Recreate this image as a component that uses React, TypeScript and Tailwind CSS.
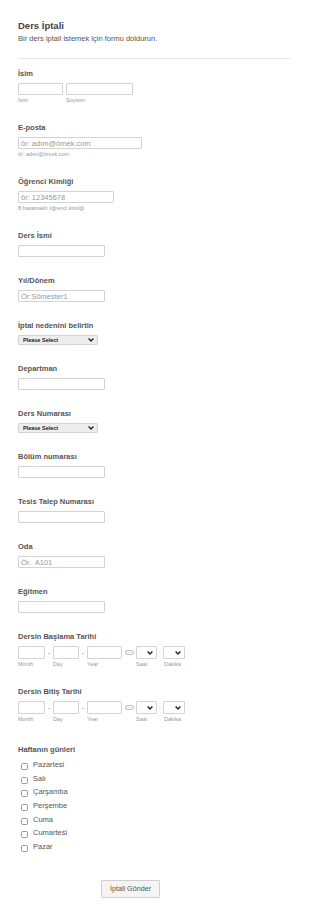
import React from 'react';

const font = { fontFamily: '"Liberation Sans", Arial, sans-serif' };

function Label({ children }: { children: React.ReactNode }) {
    return <div className="text-[7.5px] font-bold leading-[10px] text-[#555]">{children}</div>;
}

function Sub({ children, className = '' }: { children: React.ReactNode; className?: string }) {
    return <div className={`mt-[2px] text-[5.5px] leading-[7px] text-[#999] ${className}`}>{children}</div>;
}

function TextBox({ w, placeholder }: { w: string; placeholder?: string }) {
    return (
        <input
            type="text"
            placeholder={placeholder}
            className={`block ${w} h-[12px] px-[2px] border border-[#d3d3d3] rounded-[1px] bg-white text-[7.5px] leading-[10px] text-[#555] placeholder:text-[#999] outline-none`}
        />
    );
}

function Chevron() {
    return (
        <svg width="6" height="4" viewBox="0 0 6 4" className="block shrink-0">
            <path d="M0.6 0.6 L3 3 L5.4 0.6" fill="none" stroke="#222" strokeWidth="1.4" />
        </svg>
    );
}

function SelectBox() {
    return (
        <div className="mt-[4px] w-[80px] h-[10px] flex items-center justify-between pl-[4px] pr-[3px] border border-[#d3d3d3] bg-[#ededed] rounded-[1px]">
            <span className="text-[5.5px] font-bold leading-[8px] text-[#222]">Please Select</span>
            <Chevron />
        </div>
    );
}

function Field({ label, children }: { label: string; children: React.ReactNode }) {
    return (
        <div className="mt-[19px]">
            <Label>{label}</Label>
            {children}
        </div>
    );
}

function Simple({ label, placeholder }: { label: string; placeholder?: string }) {
    return (
        <Field label={label}>
            <div className="mt-[4px]">
                <TextBox w="w-[87px]" placeholder={placeholder} />
            </div>
        </Field>
    );
}

function TimeSelect({ w }: { w: string }) {
    return (
        <div className={`${w} h-[13px] flex items-center justify-end pr-[3px] border border-[#d3d3d3] bg-white rounded-[1px]`}>
            <Chevron />
        </div>
    );
}

function DateField({ label }: { label: string }) {
    const box = 'h-[13px] border border-[#d3d3d3] rounded-[1px] bg-white';
    return (
        <div className="mt-[19px]">
            <Label>{label}</Label>
            <div className="mt-[4px] flex items-start">
                <div className="flex flex-col">
                    <div className={`w-[27px] ${box}`} />
                    <Sub className="mt-[1px]">Month</Sub>
                </div>
                <span className="w-[8px] text-center text-[7px] leading-[13px] text-[#999]">-</span>
                <div className="flex flex-col">
                    <div className={`w-[26px] ${box}`} />
                    <Sub className="mt-[1px]">Day</Sub>
                </div>
                <span className="w-[8px] text-center text-[7px] leading-[13px] text-[#999]">-</span>
                <div className="flex flex-col">
                    <div className={`w-[35px] ${box}`} />
                    <Sub className="mt-[1px]">Year</Sub>
                </div>
                <div className="ml-[2px] w-[11px] h-[13px] flex items-center justify-center">
                    <svg width="9" height="5" viewBox="0 0 9 5" className="block">
                        <rect x="0.5" y="0.5" width="8" height="4" rx="2" fill="none" stroke="#aaa" strokeWidth="0.8" />
                        <line x1="1.5" y1="2.5" x2="7.5" y2="2.5" stroke="#ccc" strokeWidth="0.6" />
                    </svg>
                </div>
                <div className="ml-[1px] flex flex-col">
                    <TimeSelect w="w-[21px]" />
                    <Sub className="mt-[1px]">Saat</Sub>
                </div>
                <span className="w-[6px] text-center text-[7px] leading-[13px] text-[#999]">:</span>
                <div className="flex flex-col">
                    <TimeSelect w="w-[22px]" />
                    <Sub className="mt-[1px] pl-[1px]">Dakika</Sub>
                </div>
            </div>
        </div>
    );
}

const days = ['Pazartesi', 'Salı', 'Çarşamba', 'Perşembe', 'Cuma', 'Cumartesi', 'Pazar'];

export default function App() {
    return (
        <div style={font} className="w-[310px] min-h-[918px] bg-white px-[18px] pt-[20px] pb-[20px] text-[7.5px] leading-[10px]">
            {/* Header */}
            <h1 className="text-[9.5px] font-bold leading-[12px] text-[#444]">Ders İptali</h1>
            <p className="mt-[2px] text-[7.5px] leading-[10px] text-[#555]">Bir ders iptali istemek için formu doldurun.</p>
            <div className="mt-[14px] w-[272px] border-t border-[#e6e6e6]" />

            {/* Name */}
            <div className="mt-[10px]">
                <Label>İsim</Label>
                <div className="mt-[4px] flex gap-[3px]">
                    <div>
                        <TextBox w="w-[45px]" />
                        <Sub>İsim</Sub>
                    </div>
                    <div>
                        <TextBox w="w-[67px]" />
                        <Sub>Soyisim</Sub>
                    </div>
                </div>
            </div>

            <Field label="E-posta">
                <div className="mt-[4px]">
                    <TextBox w="w-[124px]" placeholder="ör: adım@ömek.com" />
                    <Sub>ör: adım@ömek.com</Sub>
                </div>
            </Field>

            <Field label="Öğrenci Kimliği">
                <div className="mt-[4px]">
                    <TextBox w="w-[96px]" placeholder="ör: 12345678" />
                    <Sub>8 basamaklı öğrenci kimliği</Sub>
                </div>
            </Field>

            <Simple label="Ders İsmi" />
            <Simple label="Yıl/Dönem" placeholder="Ör:Sömester1" />

            <Field label="İptal nedenini belirtin">
                <SelectBox />
            </Field>

            <Simple label="Departman" />

            <Field label="Ders Numarası">
                <SelectBox />
            </Field>

            <Simple label="Bölüm numarası" />
            <Simple label="Tesis Talep Numarası" />
            <Simple label="Oda" placeholder="Ör.  A101" />
            <Simple label="Eğitmen" />

            <DateField label="Dersin Başlama Tarihi" />
            <DateField label="Dersin Bitiş Tarihi" />

            {/* Days */}
            <div className="mt-[22px]">
                <Label>Haftanın günleri</Label>
                <div className="mt-[3px] flex flex-col">
                    {days.map(d => (
                        <label key={d} className="h-[13.7px] flex items-center pl-[3px]">
                            <span className="mt-[3px] w-[7px] h-[7px] border border-[#999] rounded-[1.5px] bg-white shrink-0" />
                            <span className="ml-[5px] text-[7.5px] leading-[10px] text-[#555]">{d}</span>
                        </label>
                    ))}
                </div>
            </div>

            {/* Submit */}
            <div className="mt-[26px] pl-[83px]">
                <button className="block w-[59px] h-[18px] border border-[#cfcfcf] bg-[#f4f4f4] rounded-[1px] text-[7.2px] leading-[10px] text-[#555]">
                    İptali Gönder
                </button>
            </div>
        </div>
    );
}
